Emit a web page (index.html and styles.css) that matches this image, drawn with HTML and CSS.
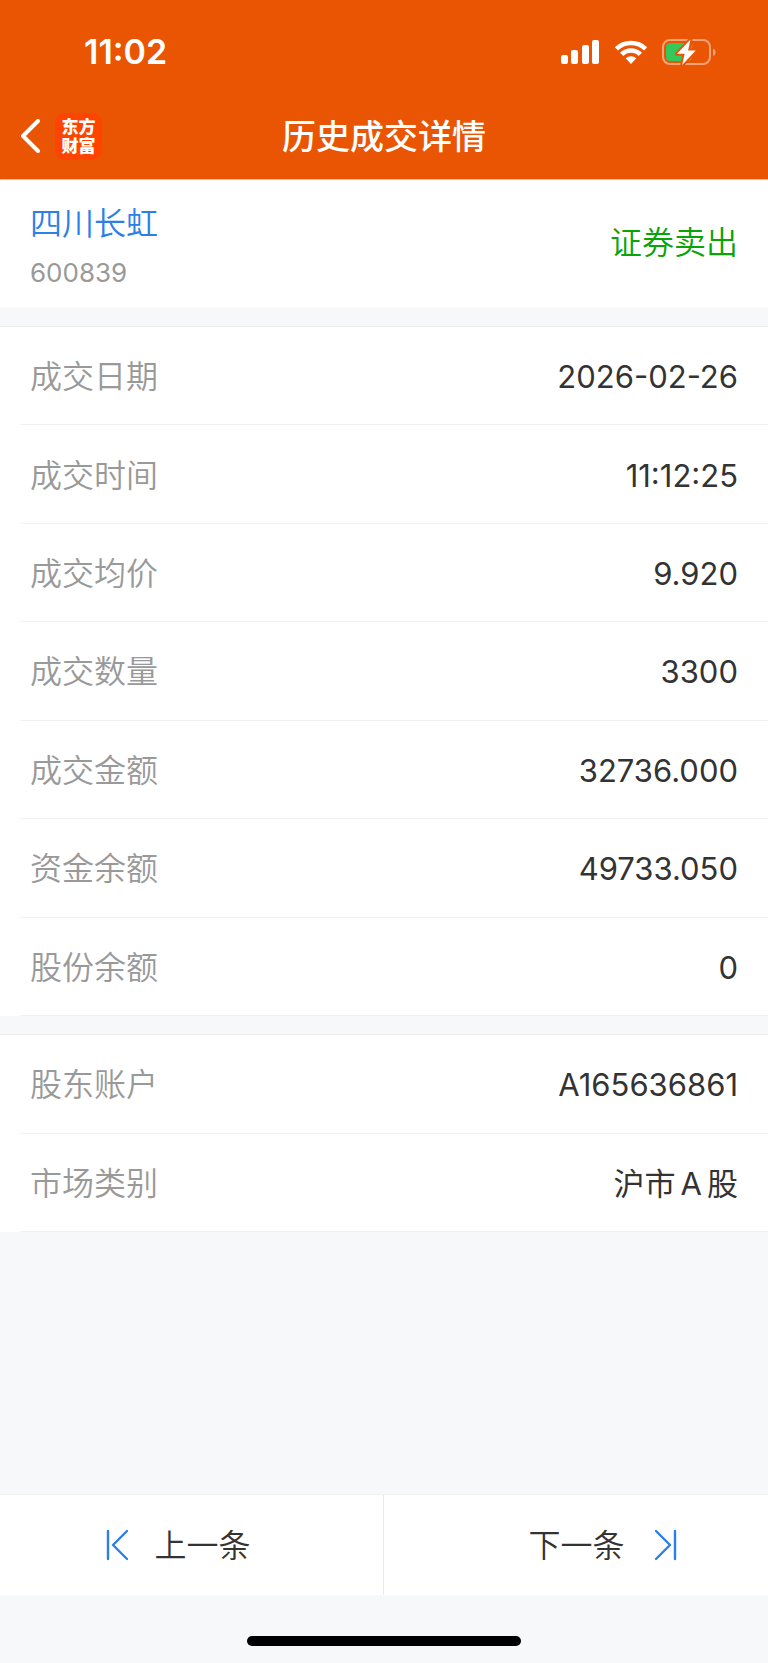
FILE: index.html
```html
<!DOCTYPE html>
<html lang="zh-CN">
<head>
<meta charset="utf-8">
<meta name="viewport" content="width=device-width, initial-scale=1">
<title>历史成交详情</title>
<link rel="stylesheet" href="styles.css">
</head>
<body>
<div class="page">
  <header class="header">
    <div class="status">
      <span class="status-time">11:02</span>
      <div class="status-icons">
        <svg class="icon-signal" viewBox="0 0 39 26" aria-hidden="true">
          <rect x="0" y="16" width="7" height="9" rx="2"/>
          <rect x="10" y="11" width="7" height="14" rx="2"/>
          <rect x="21" y="6" width="7" height="19" rx="2"/>
          <rect x="31" y="1" width="7" height="24" rx="2"/>
        </svg>
        <svg class="icon-wifi" viewBox="0 0 34 26" aria-hidden="true">
          <path d="M.8 8.300a23 23 0 0 1 32.400 0l-3.200 3.200a18.500 18.500 0 0 0-26 0z"/>
          <path d="M6 13.700a15.600 15.600 0 0 1 22 0l-3.400 3.300a10.800 10.800 0 0 0-15.200 0z"/>
          <path d="M11.700 19.300a7.600 7.600 0 0 1 10.600 0L17 25z"/>
        </svg>
        <svg class="icon-battery" viewBox="0 0 54 28" aria-hidden="true">
          <rect class="battery-case" x="1" y="2" width="47" height="24" rx="7"/>
          <path class="battery-tip" d="M51 10.500c3.400 1.400 3.400 6 0 7.400z"/>
          <rect class="battery-level" x="4" y="5" width="26" height="18" rx="4"/>
          <path class="battery-bolt" d="M28.500 1.500L15 15.800h7.600L20.200 27 33.700 12.400h-7.600z"/>
        </svg>
      </div>
    </div>
    <nav class="nav">
      <div class="nav-side">
        <button class="back" type="button" aria-label="返回">
          <svg class="icon-back" viewBox="0 0 20 34" aria-hidden="true"><path d="M18 2L3 17l15 15"/></svg>
        </button>
        <a class="brand" href="#"><span>东方</span><span>财富</span></a>
      </div>
      <h1 class="title">历史成交详情</h1>
      <div class="nav-side"></div>
    </nav>
  </header>

  <main class="content">
    <section class="stock">
      <div class="stock-info">
        <a class="stock-name" href="#">四川长虹</a>
        <span class="stock-code">600839</span>
      </div>
      <span class="stock-side">证券卖出</span>
    </section>

    <dl class="group group-trade">
      <div class="row"><dt>成交日期</dt><dd>2026-02-26</dd></div>
      <div class="row"><dt>成交时间</dt><dd>11:12:25</dd></div>
      <div class="row"><dt>成交均价</dt><dd>9.920</dd></div>
      <div class="row"><dt>成交数量</dt><dd>3300</dd></div>
      <div class="row"><dt>成交金额</dt><dd>32736.000</dd></div>
      <div class="row"><dt>资金余额</dt><dd>49733.050</dd></div>
      <div class="row"><dt>股份余额</dt><dd>0</dd></div>
    </dl>

    <dl class="group group-account">
      <div class="row"><dt>股东账户</dt><dd>A165636861</dd></div>
      <div class="row"><dt>市场类别</dt><dd>沪市<span class="latin">A</span>股</dd></div>
    </dl>
  </main>

  <footer class="footer">
    <div class="pager">
      <button class="pager-button pager-prev" type="button">
        <svg class="icon-step" viewBox="0 0 22 32" aria-hidden="true"><path d="M2 2v28M21 2L7 16l14 14"/></svg>
        <span class="pager-label">上一条</span>
      </button>
      <button class="pager-button pager-next" type="button">
        <span class="pager-label">下一条</span>
        <svg class="icon-step" viewBox="0 0 22 32" aria-hidden="true"><path d="M20 2v28M1 2l14 14L1 30"/></svg>
      </button>
    </div>
    <div class="home-area"><div class="home-bar"></div></div>
  </footer>
</div>
</body>
</html>
```

FILE: styles.css
```css
* {
  box-sizing: border-box;
}

body {
  margin: 0;
  background: #f6f8fa;
  color: #333;
  font-family: Inter, "Noto Sans CJK SC", sans-serif;
  font-size: 32px;
  font-weight: 350;
  line-height: 40px;
}

button {
  padding: 0;
  border: 0;
  background: none;
  color: inherit;
  font: inherit;
  cursor: pointer;
}

a {
  color: inherit;
  text-decoration: none;
}

.page {
  display: flex;
  flex-direction: column;
  min-height: 100vh;
}

/* Header */
.header {
  background: #ea5504;
  border-bottom: 1px solid #f9b793;
  color: #fff;
}

.status {
  display: flex;
  align-items: center;
  justify-content: space-between;
  height: 93px;
  padding: 10px 52px 0 84px;
}

.status-time {
  font-size: 34px;
  font-weight: 600;
}

.status-icons {
  display: flex;
  align-items: center;
  gap: 14px;
  fill: #fff;
}

.icon-signal {
  width: 39px;
  height: 26px;
}

.icon-wifi {
  width: 34px;
  height: 26px;
}

.icon-battery {
  width: 54px;
  height: 28px;
}

.battery-case {
  fill: none;
  stroke: #f5a277;
  stroke-width: 2;
}

.battery-tip {
  fill: #f5a277;
}

.battery-level {
  fill: #34c759;
}

.battery-bolt {
  stroke: #ea5504;
  stroke-width: 4;
  paint-order: stroke;
  stroke-linejoin: round;
}

.nav {
  display: flex;
  align-items: center;
  height: 86px;
  padding: 0 20px;
}

.nav-side {
  display: flex;
  flex: 1;
  align-items: center;
  gap: 15px;
}

.back {
  display: flex;
}

.icon-back {
  width: 20px;
  height: 34px;
  fill: none;
  stroke: #fff;
  stroke-width: 4;
  stroke-linecap: round;
  stroke-linejoin: round;
}

.brand {
  display: flex;
  flex-direction: column;
  align-items: center;
  justify-content: center;
  width: 47px;
  height: 47px;
  padding-top: 1px;
  border-radius: 10px;
  background: #ff4400;
  font-size: 17px;
  font-weight: 900;
  line-height: 19px;
}

.title {
  margin: 0;
  padding-top: 2px;
  font-size: 34px;
  font-weight: 500;
}

/* Stock summary */
.stock {
  display: flex;
  align-items: center;
  justify-content: space-between;
  padding: 24px 30px 18px;
  border-radius: 4px 4px 0 0;
  background: #fff;
}

.stock-info {
  display: flex;
  flex-direction: column;
  gap: 13px;
}

.stock-name {
  color: #2c7fe8;
}

.stock-code {
  color: #999;
  font-size: 26px;
  font-weight: 400;
  line-height: 32px;
}

.stock-side {
  padding-bottom: 8px;
  color: #0aa30a;
}

/* Detail lists */
.group {
  display: grid;
  grid-auto-rows: 1fr;
  margin: 19px 0 0;
  border-top: 1px solid #ececee;
  background: #fff;
}

.group-trade {
  min-height: 690px;
}

.group-account {
  min-height: 198px;
  margin-top: 18px;
}

.row {
  display: flex;
  align-items: center;
  justify-content: space-between;
  margin-left: 20px;
  padding: 3px 30px 0 10px;
  border-bottom: 1px solid #f0f1f2;
}

.row dt {
  color: #999;
}

.row dd {
  margin: 0;
  font-size: 31px;
  font-weight: 400;
}

.latin {
  margin: 0 5px;
}

/* Pager */
.footer {
  margin-top: auto;
}

.pager {
  display: flex;
  border-top: 1px solid #eef0f3;
}

.pager-button {
  display: flex;
  align-items: center;
  justify-content: center;
  width: 50%;
  height: 100px;
  background: #fff;
}

.pager-label {
  padding-top: 2px;
}

.pager-prev {
  gap: 26px;
  padding-right: 26px;
  border-right: 1px solid #e9eaec;
}

.pager-next {
  gap: 30px;
  padding-left: 53px;
}

.icon-step {
  width: 22px;
  height: 32px;
  fill: none;
  stroke: #2c7fe8;
  stroke-width: 2.4;
  stroke-linecap: round;
  stroke-linejoin: round;
}

.home-area {
  display: flex;
  justify-content: center;
  padding: 41px 0 17px;
}

.home-bar {
  width: 274px;
  height: 10px;
  border-radius: 5px;
  background: #000;
}
```
